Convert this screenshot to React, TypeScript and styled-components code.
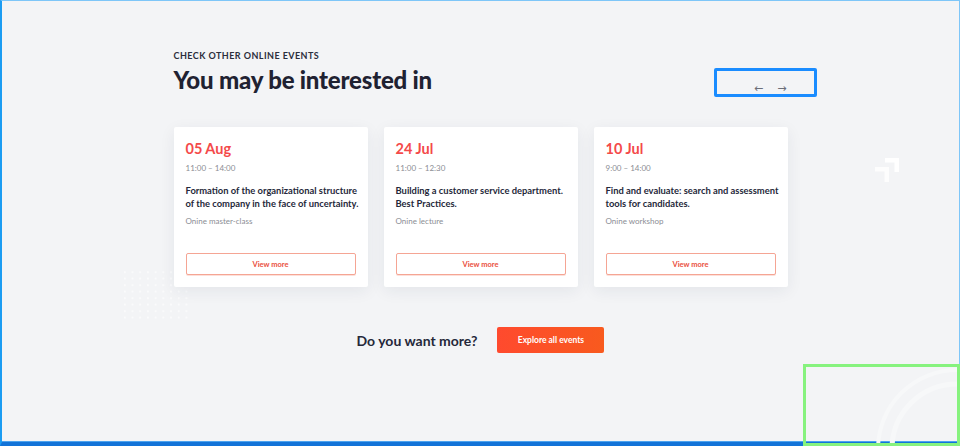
import React from "react";
import styled, { createGlobalStyle } from "styled-components";

const Global = createGlobalStyle`
  html, body { margin: 0; padding: 0; }
  body { font-family: Lato, "Open Sans", Arial, sans-serif; background: #f3f4f6; }
  * { box-sizing: border-box; }
`;

const Frame = styled.div`
  position: relative;
  width: 960px;
  height: 446px;
  background: #f3f4f6;
  border-top: 1px solid #7ec6f8;
  border-left: 2px solid #1b9cf2;
  border-right: 1px solid #7ec6f8;
  border-bottom: 4px solid #1273d8;
  box-shadow: inset 0 -1px 0 #4da3ee;
`;

const Content = styled.main`
  position: relative;
  width: 614px;
  margin: 0 auto;
  padding-top: 49px;
  z-index: 1;
`;

const Eyebrow = styled.div`
  font-size: 9px;
  font-weight: 700;
  letter-spacing: 0.45px;
  color: #2b2e3c;
  text-transform: uppercase;
  line-height: 12px;
`;

const HeaderRow = styled.div`
  display: flex;
  justify-content: space-between;
  align-items: flex-start;
  margin-top: 3px;
`;

const Title = styled.h2`
  margin: 0;
  font-size: 24px;
  font-weight: 900;
  color: #1f2232;
  line-height: 29px;
  letter-spacing: -0.2px;
`;

const NavBox = styled.div`
  width: 103px;
  height: 29px;
  margin-top: 3px;
  margin-right: -29px;
  border: 3px solid #1a8cff;
  border-radius: 2px;
  display: flex;
  justify-content: flex-end;
  align-items: flex-end;
  gap: 14px;
  padding: 0 27px 0 0;
`;

const Arrow = styled.span`
  font-size: 11px;
  line-height: 10px;
  color: #6b6e78;
  font-family: "DejaVu Sans", sans-serif;
`;

const Cards = styled.div`
  display: grid;
  grid-template-columns: repeat(3, 194px);
  gap: 16px;
  margin-top: 30px;
`;

const Card = styled.article`
  height: 160px;
  background: #ffffff;
  border-radius: 2px;
  box-shadow: 0 4px 16px rgba(30, 40, 70, 0.07);
  padding: 13px 12px 12px 12px;
  display: flex;
  flex-direction: column;
`;

const DateText = styled.div`
  font-size: 14.5px;
  font-weight: 700;
  color: #f44a4a;
  line-height: 18px;
`;

const Time = styled.div`
  margin-top: 5px;
  font-size: 8px;
  color: #8b8d94;
  line-height: 10px;
`;

const EventTitle = styled.div`
  margin-top: 11px;
  margin-right: -8px;
  font-size: 9.4px;
  font-weight: 700;
  color: #25283a;
  line-height: 13px;
`;

const Kind = styled.div`
  margin-top: 6px;
  font-size: 8px;
  color: #8b8d94;
  line-height: 10px;
`;

const ViewButton = styled.button`
  margin-top: auto;
  height: 22px;
  width: 100%;
  background: #fff;
  border: 1px solid #f5a594;
  border-radius: 2px;
  box-shadow: 0 1px 0 rgba(245, 165, 148, 0.35);
  color: #ea5040;
  font-family: inherit;
  font-size: 7.5px;
  font-weight: 700;
  cursor: pointer;
`;

const MoreRow = styled.div`
  display: flex;
  justify-content: center;
  align-items: center;
  gap: 20px;
  margin-top: 40px;
`;

const MoreText = styled.div`
  font-size: 14px;
  font-weight: 700;
  color: #25283a;
`;

const Explore = styled.button`
  width: 107px;
  height: 26px;
  border: 0;
  border-radius: 2px;
  background: linear-gradient(90deg, #ff4a2e 0%, #f85a1e 100%);
  color: #fff;
  font-family: inherit;
  font-size: 8.5px;
  font-weight: 700;
  cursor: pointer;
`;

const Dots = styled.svg`
  position: absolute;
  left: 119px;
  top: 268px;
  opacity: 0.75;
`;

const CornerIcon = styled.svg`
  position: absolute;
  left: 869px;
  top: 155px;
`;

const Rings = styled.svg`
  position: absolute;
  left: 862px;
  top: 362px;
`;

const GreenBox = styled.div`
  position: absolute;
  left: 801px;
  top: 363px;
  width: 157px;
  height: 82px;
  border: 3px solid #86f27e;
  z-index: 2;
`;

const events = [
  {
    date: "05 Aug",
    time: "11:00 – 14:00",
    title: "Formation of the organizational structure of the company in the face of uncertainty.",
    kind: "Onine master-class",
  },
  {
    date: "24 Jul",
    time: "11:00 – 12:30",
    title: "Building a customer service department. Best Practices.",
    kind: "Onine lecture",
  },
  {
    date: "10 Jul",
    time: "9:00 – 14:00",
    title: "Find and evaluate: search and assessment tools for candidates.",
    kind: "Onine workshop",
  },
];

export default function App() {
  return (
    <>
      <Global />
      <Frame>
        <Dots width="70" height="52" viewBox="0 0 70 52">
          <defs>
            <pattern id="dotgrid" x="0" y="0" width="7.7" height="6.5" patternUnits="userSpaceOnUse">
              <circle cx="3.8" cy="3.2" r="1" fill="#ffffff" />
            </pattern>
          </defs>
          <rect width="70" height="52" fill="url(#dotgrid)" />
        </Dots>
        <CornerIcon width="28" height="28" viewBox="0 0 28 28">
          <path d="M14 2 H28 V16 H23.5 V6.5 H14 Z" fill="#ffffff" />
          <path d="M4 11 H18 V26 H13.5 V15.5 H4 Z" fill="#ffffff" opacity="0.8" />
        </CornerIcon>
        <Rings width="96" height="84" viewBox="0 0 96 84">
          <circle cx="93" cy="86" r="79" fill="none" stroke="#f7f8f9" strokeWidth="4" />
          <circle cx="93" cy="86" r="65" fill="none" stroke="#f7f8f9" strokeWidth="5" />
        </Rings>
        <Content>
          <Eyebrow>Check other online events</Eyebrow>
          <HeaderRow>
            <Title>You may be interested in</Title>
            <NavBox>
              <Arrow>←</Arrow>
              <Arrow>→</Arrow>
            </NavBox>
          </HeaderRow>
          <Cards>
            {events.map((e) => (
              <Card key={e.date}>
                <DateText>{e.date}</DateText>
                <Time>{e.time}</Time>
                <EventTitle>{e.title}</EventTitle>
                <Kind>{e.kind}</Kind>
                <ViewButton>View more</ViewButton>
              </Card>
            ))}
          </Cards>
          <MoreRow>
            <MoreText>Do you want more?</MoreText>
            <Explore>Explore all events</Explore>
          </MoreRow>
        </Content>
        <GreenBox />
      </Frame>
    </>
  );
}
